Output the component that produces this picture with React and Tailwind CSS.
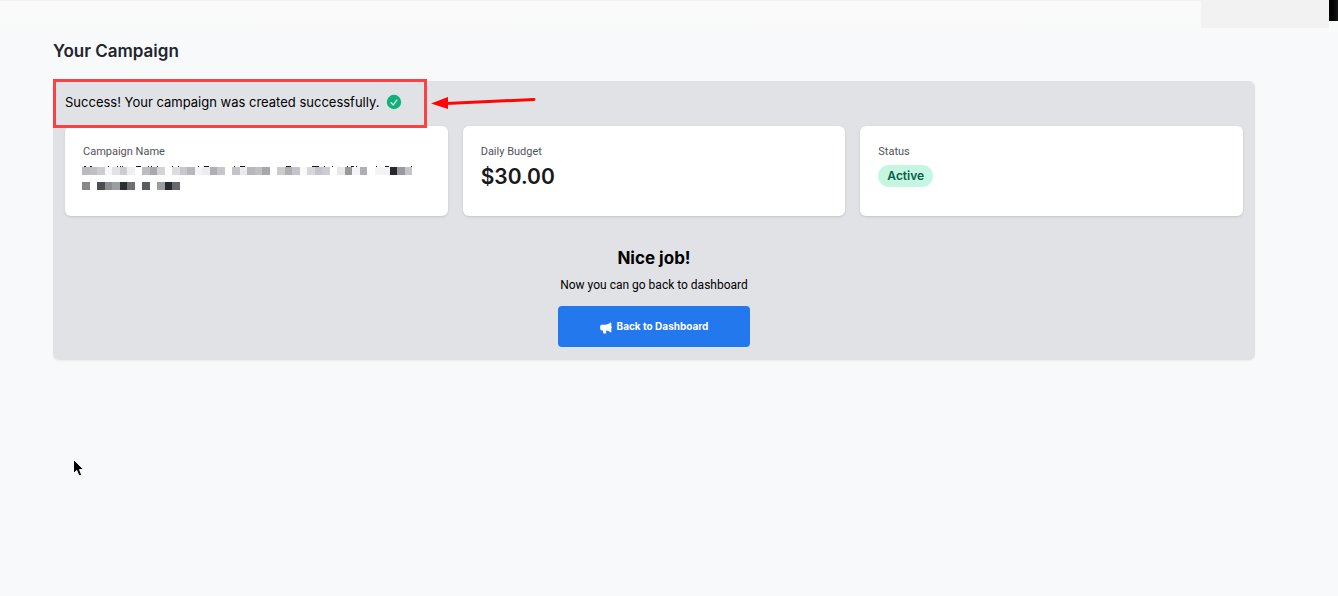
import { HiMiniCheckCircle } from "react-icons/hi2";

// one entry per mosaic cell, null leaves the card showing through
const nameRows = [
    {
        y: 3,
        cells: [
            "#bbbbbd", "#c0c0c2", "#cdcdcf", "#f7f7f9", "#e2e2e6", "#ccccd2", "#efeff2", null,
            "#bdbdc0", "#a9a9ab", "#d4d4d6", null, "#dddddf", "#c8c8cc", "#b8b8ba", "#f4f4f7",
            "#ededf1", "#b0b0b4", "#c6c6c8", null, "#c4c4c8", "#ebebee", "#b8b8bc", "#c0c0c2",
            "#a8a8aa", null, "#cccccc", "#b0b0b4", "#c4c4cb", "#fafafb", "#d8d8dc", "#c4c4cb",
            "#ccccd2", null, "#e8e8e8", "#999999", "#f4f4f6", "#b0b0b2", null, "#f4f4f6",
            "#f4f4f6", "#28282c", "#9a9a9e", "#c4c4c9",
        ],
    },
    {
        y: 18,
        cells: [
            "#88888c", null, "#4c4c52", "#888c8e", "#999ea0", "#2a2e30", "#6c7072", "#fafafa",
            "#5a5a60", null, "#989e9e", "#262b2d", "#66696b",
        ],
    },
];

// letter tops that peek out above the first mosaic row: [x, width]
const letterTops = [
    [2, 2], [8, 2], [26, 1], [35, 1], [38, 1], [40, 1], [54, 5], [66, 1], [69, 1], [75, 1],
    [90, 1], [96, 1], [116, 1], [122, 5], [152, 1], [158, 5], [204, 5], [230, 7], [242, 1],
    [250, 1], [265, 1], [269, 3], [274, 1], [294, 1], [303, 4], [329, 1],
];

function RedactedName() {
    return (
        <svg width="330" height="28" viewBox="0 0 330 28" className="-ml-px block" role="img" aria-label="Hidden campaign name">
            {letterTops.map(([x, w]) => (
                <rect key={x} x={x} y="2" width={w} height="1" fill="#18181b" />
            ))}
            {nameRows.map((row) =>
                row.cells.map((fill, i) =>
                    fill ? <rect key={`${row.y}-${i}`} x={i * 7.5} y={row.y} width="7.5" height="8" fill={fill} shapeRendering="crispEdges" /> : null
                )
            )}
        </svg>
    );
}

function StatCard({ label, children }) {
    return (
        <div className="h-[90px] bg-white rounded-md shadow-sm px-[18px] pt-[18px]">
            <p className="font-['Roboto',sans-serif] text-[11px] leading-4 text-zinc-600">{label}</p>
            {children}
        </div>
    );
}

export default function App() {
    return (
        <div className="relative min-h-screen bg-linear-to-b from-[#fafafa] to-[#f8f9fb] to-10% border-t border-[#f0f0f1] pl-[53px] pr-[83px] pt-[38px] font-['Inter',sans-serif]">
            <div className="absolute -top-px right-[9px] w-[128px] h-7 bg-[#f2f2f2]"></div>
            <div className="absolute -top-px right-0 w-[9px] h-[21px] bg-linear-to-r from-black to-[#15151c]"></div>

            <h1 className="text-[17px] leading-6 font-semibold text-[#22252c]">Your Campaign</h1>

            <main className="mt-[18px] rounded-md bg-[#e1e2e6] shadow-xs px-3 pt-2 pb-[13px]">
                <div className="relative">
                    <div className="h-[37px] pt-px flex gap-[7px] text-[13px] leading-6 text-black">
                        <p>Success! Your campaign was created successfully.</p>
                        <HiMiniCheckCircle size={18} className="mt-[3px] -ml-px text-[#10b07c]" />
                    </div>

                    {/* Callout frame and arrow */}
                    <div className="absolute z-10 -left-3 -top-[10px] w-[374px] h-[49px] border-3 border-[#fb4242]"></div>
                    <svg className="absolute z-10 left-[366px] top-[5px] text-[#fe0606]" width="106" height="18" viewBox="0 0 106 18" aria-hidden="true">
                        <path d="M15 9.5 L103 5.5" stroke="currentColor" strokeWidth="3" strokeLinecap="round" />
                        <path d="M0 9.5 L17 3 V15 Z" fill="currentColor" />
                    </svg>
                </div>

                <section className="grid grid-cols-3 gap-[15px]">
                    <StatCard label="Campaign Name">
                        <div className="mt-1">
                            <RedactedName />
                        </div>
                    </StatCard>
                    <StatCard label="Daily Budget">
                        <p className="mt-px text-[21px] leading-8 font-semibold text-[#18181b]">$30.00</p>
                    </StatCard>
                    <StatCard label="Status">
                        <span className="mt-[5px] inline-block rounded-full bg-[#c5f6e1] px-[9px] text-[12px] leading-[22px] font-semibold text-[#065f46]">
                            Active
                        </span>
                    </StatCard>
                </section>

                <section className="mt-[30px] flex flex-col items-center text-black">
                    <h2 className="text-[17px] leading-6 font-bold">Nice job!</h2>
                    <p className="mt-[5px] font-['Roboto',sans-serif] text-[12px] leading-5">Now you can go back to dashboard</p>
                    <button className="mt-[11px] w-48 h-[41px] flex items-center justify-center gap-[5px] rounded bg-[#2478ee] text-[10px] font-bold text-white">
                        <svg width="12" height="12" viewBox="0 0 12 12" fill="currentColor" aria-hidden="true" className="mt-[2px]">
                            <path d="M10.3 0.6 C10.8 0.4 11.3 0.6 11.3 1.2 V4.4 C12 4.8 12 6.2 11.3 6.6 V9.8 C11.3 10.4 10.7 10.6 10.3 10.2 C9 9.1 7.6 8.5 6 8.4 L6.3 11 C6.3 11.4 6 11.6 5.6 11.6 H4 C3.6 11.6 3.4 11.4 3.3 11 L2.8 8.4 H1.8 C0.8 8.4 0.2 7.6 0.2 6.8 V4.4 C0.2 3.4 0.9 2.7 1.8 2.7 H5 C7 2.7 8.9 2 10.3 0.6 Z" />
                        </svg>
                        Back to Dashboard
                    </button>
                </section>
            </main>

            {/* Mouse pointer */}
            <svg className="absolute left-[72px] top-[457px]" width="14" height="20" viewBox="0 0 14 20" aria-hidden="true">
                <path d="M1.5 1.5 V15.5 L4.8 12.5 L7 18 L9.7 16.9 L7.5 11.6 H11.8 Z" fill="#000" stroke="#fff" strokeWidth="1" />
            </svg>
        </div>
    );
}
